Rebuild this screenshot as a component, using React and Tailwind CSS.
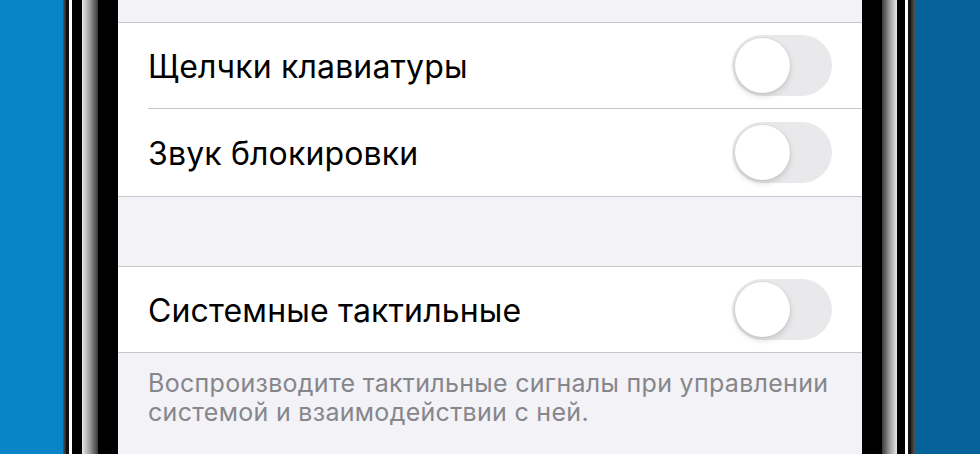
export default function App() {
  const Toggle = () => (
    <div className="relative h-[61px] w-[100px] shrink-0 rounded-full bg-[#e9e9eb]">
      <div className="absolute left-[3px] top-[3px] h-[55px] w-[55px] rounded-full bg-white shadow-[0_3px_6px_rgba(0,0,0,0.15),0_0_0_1px_rgba(0,0,0,0.04)]" />
    </div>
  );
  const font = { fontFamily: "Inter, 'Noto Sans', sans-serif" };
  return (
    <div className="flex h-[454px] w-[980px] overflow-hidden" style={font}>
      <div className="w-[63px] shrink-0 bg-[#0785c7]" />
      <div className="flex shrink-0">
        <div className="w-[3px] bg-gradient-to-r from-[#555] to-[#2a2a2a]" />
        <div className="w-[3px] bg-[#111]" />
        <div className="w-[3px] bg-white" />
        <div className="w-[10px] bg-black" />
        <div className="w-[16px] bg-gradient-to-r from-[#e8e8e8] via-[#9a9a9a] to-[#3a3a3a]" />
        <div className="w-[20px] bg-black" />
      </div>
      <div className="flex w-[744px] shrink-0 flex-col bg-[#f2f2f7]">
        <div className="h-[23px] shrink-0 border-b border-[#c8c7cc]" />
        <div className="bg-white">
          <div className="flex h-[86px] items-center pl-[30px]">
            <div className="flex h-full flex-1 items-center justify-between border-b border-[#c8c7cc] pr-[30px]">
              <span className="pt-[2px] text-[32px] tracking-[0.15px] text-black">Щелчки клавиатуры</span>
              <Toggle />
            </div>
          </div>
          <div className="flex h-[88px] items-center justify-between border-b border-[#c8c7cc] pl-[30px] pr-[30px]">
            <span className="pt-[2px] text-[32px] tracking-[0.15px] text-black">Звук блокировки</span>
            <Toggle />
          </div>
        </div>
        <div className="h-[70px] shrink-0 border-b border-[#c8c7cc]" />
        <div className="flex h-[86px] shrink-0 items-center justify-between border-b border-[#c8c7cc] bg-white pl-[30px] pr-[30px]">
          <span className="pt-[2px] text-[32px] tracking-[0.15px] text-black">Системные тактильные</span>
          <Toggle />
        </div>
        <div className="whitespace-nowrap pl-[30px] pt-[16px] text-[25px] leading-[29px] tracking-[0.3px] text-[#86868b]">
          Воспроизводите тактильные сигналы при управлении
          <br />
          системой и взаимодействии с ней.
        </div>
      </div>
      <div className="flex shrink-0">
        <div className="w-[20px] bg-black" />
        <div className="w-[15px] bg-gradient-to-r from-[#3a3a3a] via-[#9a9a9a] to-[#e8e8e8]" />
        <div className="w-[8px] bg-black" />
        <div className="w-[3px] bg-white" />
        <div className="w-[3px] bg-[#111]" />
        <div className="w-[4px] bg-gradient-to-r from-[#2a2a2a] to-[#555]" />
      </div>
      <div className="flex-1 bg-[#05629a]" />
    </div>
  );
}
